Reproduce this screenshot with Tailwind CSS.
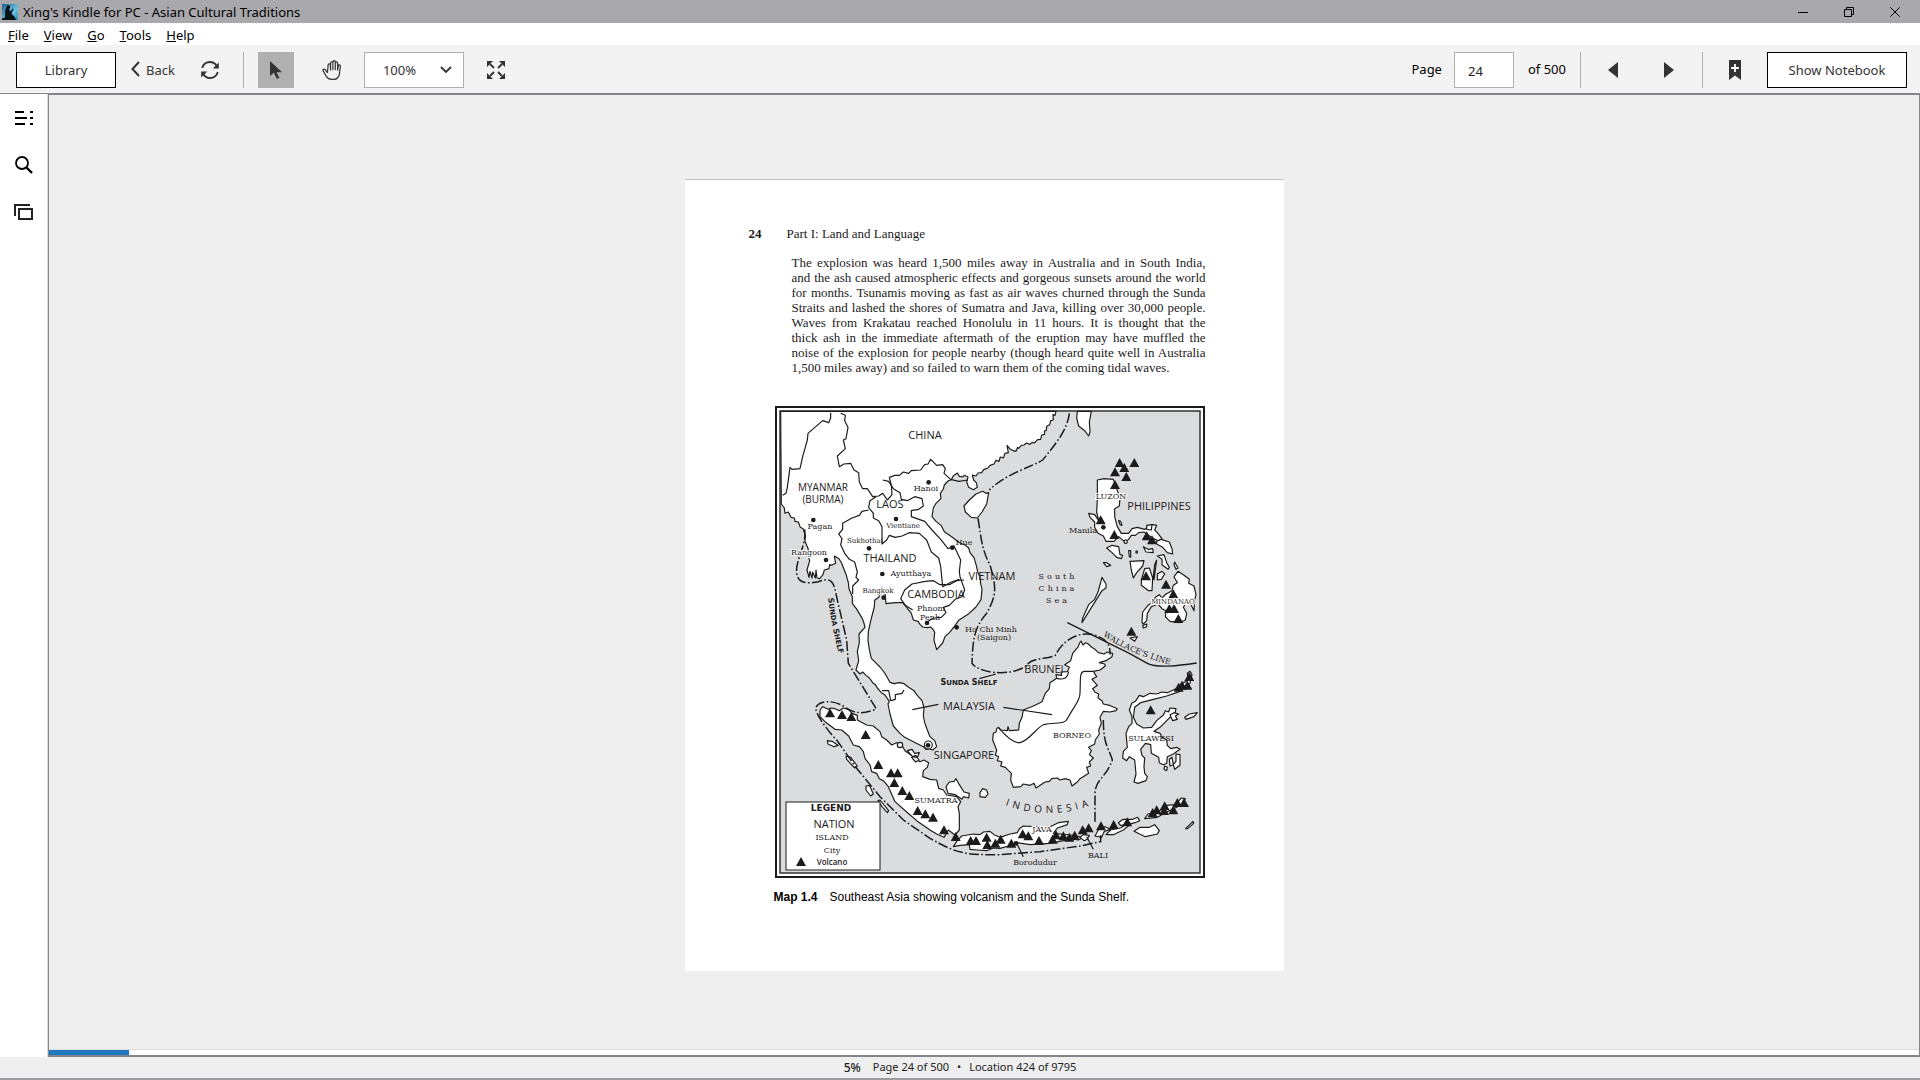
<!DOCTYPE html>
<html lang="en">
<head>
    <meta charset="UTF-8">
    <meta name="viewport" content="width=device-width, initial-scale=1.0">
    <title>Xing's Kindle for PC - Asian Cultural Traditions</title>
    <script src="https://cdn.jsdelivr.net/npm/@tailwindcss/browser@4"></script>
</head>
<body class="bg-[#efefef] font-['Noto_Sans',sans-serif] text-[13px] text-black min-h-screen flex flex-col">

    <!-- Title bar -->
    <header class="flex items-center h-[23px] bg-[#a9a8ad] pl-0.5 pr-5">
        <svg class="w-4 h-4" viewBox="0 0 16 16">
            <defs>
                <linearGradient id="sky" x1="0" y1="0" x2="1" y2="1">
                    <stop offset="0" stop-color="#1d5c80"/>
                    <stop offset=".6" stop-color="#6cc3e0"/>
                    <stop offset="1" stop-color="#2f86ae"/>
                </linearGradient>
            </defs>
            <rect width="16" height="16" fill="url(#sky)"/>
            <path d="M5 1.500a2 2 0 0 1 3 2l-1 1.500 1.500 2.500 2.500-3 .7.500-2.200 4.500 3.500 4 1 2.500H0v-1.500l3-1V7l1-2.500z" fill="#06121a"/>
        </svg>
        <h1 class="ml-[5px] grow text-[13px] leading-5">Xing's Kindle for PC - Asian Cultural Traditions</h1>
        <div class="flex items-center gap-9">
            <button aria-label="Minimize"><svg class="w-2.5 h-2.5" viewBox="0 0 10 10"><path d="M0 5.500h10" stroke="#000"/></svg></button>
            <button aria-label="Restore"><svg class="w-2.5 h-2.5" viewBox="0 0 10 10" fill="none" stroke="#000"><path d="M.5 2.500h7v7h-7zM2.500 2.500v-2h7v7h-2"/></svg></button>
            <button aria-label="Close"><svg class="w-2.5 h-2.5" viewBox="0 0 10 10"><path d="M.3.3l9.400 9.400M9.700.3L.3 9.700" stroke="#000"/></svg></button>
        </div>
    </header>

    <!-- Menu -->
    <nav class="flex items-center gap-[15px] h-[22px] bg-white px-2 pt-0.5 leading-[18px]">
        <a href="#"><u>F</u>ile</a>
        <a href="#"><u>V</u>iew</a>
        <a href="#"><u>G</u>o</a>
        <a href="#"><u>T</u>ools</a>
        <a href="#"><u>H</u>elp</a>
    </nav>

    <!-- Toolbar -->
    <div class="flex items-center justify-between h-12 bg-[#f3f3f3] pl-4 pr-[13px] pt-0.5 text-[#333]">
        <div class="flex items-center">
            <button class="w-[100px] h-9 bg-white border border-black pt-0.5">Library</button>
            <button class="flex items-center gap-1.5 ml-[15px] pt-0.5">
                <svg class="w-[9px] h-4 -mt-1" viewBox="0 0 9 16"><path d="M8 1L1.500 8 8 15" fill="none" stroke="#333" stroke-width="2"/></svg>
                Back
            </button>
            <button class="ml-[26px]" aria-label="Sync">
                <svg class="w-[18px] h-[18px]" viewBox="0 0 18 18" fill="none" stroke="#333" stroke-width="1.800">
                    <path d="M1.200 7C2.500 2.500 6 1 9 1s5 1.300 6.500 3.500M16.800 11C15.500 15.500 12 17 9 17s-5-1.300-6.500-3.500"/>
                    <path d="M17.800 1.500v6h-6zM.2 16.500v-6h6z" fill="#333" stroke="none"/>
                </svg>
            </button>
            <span class="w-px h-9 bg-[#aeaeae] ml-6"></span>
            <button class="flex items-center justify-center w-9 h-9 bg-[#b0b0b0] ml-3.5" aria-label="Select">
                <svg class="w-3 h-[18px]" viewBox="0 0 12 18" fill="#333"><path d="M0 0v15l3.800-3.300L7 18l2.300-1.200-2.800-5.600H12z"/></svg>
            </button>
            <button class="ml-7" aria-label="Pan">
                <svg class="w-5 h-5" viewBox="0 0 20 20" fill="none" stroke="#333" stroke-width="1.200" stroke-linecap="round" stroke-linejoin="round">
                    <path d="M5.500 12.500L3.200 9.700C2.200 8.600.5 9.500 1.200 10.900l3.300 5.800c1.200 1.800 2.600 2.700 5.200 2.700h2c3.500 0 5.500-2.600 5.800-6l.9-7.200c.1-1.500-1.800-1.700-2.100-.3l-.7 4.300V3c0-1.600-2.200-1.600-2.300 0v6.600V1.900c0-1.600-2.400-1.600-2.400 0v7.700V2.900c0-1.600-2.300-1.500-2.300.1v7.200l-.3-5.300c-.1-1.500-2.200-1.400-2.200.2z"/>
                </svg>
            </button>
            <label class="relative flex items-center ml-[22px]">
                <select aria-label="Zoom" class="appearance-none w-[100px] h-9 bg-white border border-[#aeaeae] pl-[18px] pt-0.5">
                    <option>100%</option>
                </select>
                <svg class="absolute right-3 w-3 h-2 pointer-events-none" viewBox="0 0 12 8"><path d="M1 1l5 5 5-5" fill="none" stroke="#333" stroke-width="1.800"/></svg>
            </label>
            <button class="ml-[23px]" aria-label="Full screen">
                <svg class="w-[18px] h-[18px]" viewBox="0 0 18 18" fill="#333" stroke="#333">
                    <path d="M3 3l4 4M15 3l-4 4M3 15l4-4M15 15l-4-4" stroke-width="1.800"/>
                    <path d="M0 0h6L0 6zM18 0v6l-6-6zM0 18v-6l6 6zM18 18h-6l6-6z" stroke="none"/>
                </svg>
            </button>
        </div>

        <div class="flex items-center">
            <label for="page" class="text-black">Page</label>
            <input id="page" value="24" class="w-[60px] h-9 ml-3 bg-white border border-[#aeaeae] px-[13px] pt-0.5 text-[#222]">
            <span class="ml-3.5 text-black">of 500</span>
            <span class="w-px h-9 bg-[#aeaeae] ml-3.5"></span>
            <button class="ml-[27px]" aria-label="Previous page"><svg class="w-2.5 h-4" viewBox="0 0 10 16" fill="#333"><path d="M10 0v16L0 8z"/></svg></button>
            <button class="ml-[46px]" aria-label="Next page"><svg class="w-2.5 h-4" viewBox="0 0 10 16" fill="#333"><path d="M0 0v16l10-8z"/></svg></button>
            <span class="w-px h-9 bg-[#aeaeae] ml-7"></span>
            <button class="ml-[26px]" aria-label="Bookmark">
                <svg class="w-3 h-5" viewBox="0 0 12 20"><path d="M0 0h12v20l-6-4.500L0 20z" fill="#333"/><path d="M6 4v8M2 8h8" stroke="#fff" stroke-width="1.800"/></svg>
            </button>
            <button class="w-[140px] h-9 bg-white border border-black ml-[26px] pt-0.5">Show Notebook</button>
        </div>
    </div>

    <div class="flex grow border-t border-[#84858a]">
        <!-- Side bar -->
        <aside class="flex flex-col items-center gap-[30px] w-12 bg-white border-r border-[#dcdcdc] pt-4">
            <button aria-label="Contents"><svg class="w-[18px] h-4" viewBox="0 0 18 16"><path d="M0 2h9M0 8h12M0 14h10M15 2h3M15 8h3M15 14h3" stroke="#000" stroke-width="2"/></svg></button>
            <button aria-label="Search"><svg class="w-[18px] h-[18px]" viewBox="0 0 18 18" fill="none" stroke="#000"><circle cx="7" cy="7" r="6" stroke-width="1.800"/><path d="M11 11l6 6" stroke-width="2.400"/></svg></button>
            <button aria-label="Flashcards"><svg class="w-[19px] h-4" viewBox="0 0 19 16" fill="none" stroke="#222" stroke-width="2"><path d="M5 5h13v10H5zM1 12V1h15"/></svg></button>
        </aside>

        <div class="flex flex-col grow border border-b-2 border-[#84858a]">
            <main class="flex grow items-center justify-center pt-1.5">
                <article class="w-[599px] h-[792px] bg-white border-t border-[#c0c0c0] pt-[45px] pl-16 pr-[78px] font-['Liberation_Serif',serif] text-[13px] text-[#1c1a1b]">
                    <p class="flex gap-[25px] leading-[18px]"><b>24</b>Part I: Land and Language</p>
                    <p class="ml-[43px] mt-3 leading-[15px] whitespace-nowrap">
                        <span class="block [text-align-last:justify]">The explosion was heard 1,500 miles away in Australia and in South India,</span>
                        <span class="block [text-align-last:justify]">and the ash caused atmospheric effects and gorgeous sunsets around the world</span>
                        <span class="block [text-align-last:justify]">for months. Tsunamis moving as fast as air waves churned through the Sunda</span>
                        <span class="block [text-align-last:justify]">Straits and lashed the shores of Sumatra and Java, killing over 30,000 people.</span>
                        <span class="block [text-align-last:justify]">Waves from Krakatau reached Honolulu in 11 hours. It is thought that the</span>
                        <span class="block [text-align-last:justify]">thick ash in the immediate aftermath of the eruption may have muffled the</span>
                        <span class="block [text-align-last:justify]">noise of the explosion for people nearby (though heard quite well in Australia</span>
                        <span class="block">1,500 miles away) and so failed to warn them of the coming tidal waves.</span>
                    </p>

                    <figure class="mt-[31px]">
                        <svg class="ml-[26px] w-[430px] h-[472px]" viewBox="0 0 430 472" role="img" aria-label="Map of Southeast Asia">
                            <defs>
                                <marker id="volcano" markerUnits="userSpaceOnUse" markerWidth="30" markerHeight="28" refX="15" refY="14"><path d="M15 0l15 27H0z" fill="#1c1a1b"/></marker>
                                <marker id="city" markerUnits="userSpaceOnUse" markerWidth="16" markerHeight="16" refX="8" refY="8"><circle cx="8" cy="8" r="7" fill="#1c1a1b"/></marker>
                                <path id="arc-indonesia" d="M218 394Q272 420 330 394"/>
                                <path id="arc-wallace" d="M324 227Q352 248 400 260"/>
                                <path id="arc-shelf" d="M52 184Q56 220 66 256"/>
                            </defs>
                            <rect x="1" y="1" width="428" height="470" fill="#fff" stroke="#1c1a1b" stroke-width="2"/>
                            <rect x="5" y="5" width="420" height="462" fill="#dbdcde" stroke="#333" stroke-width="1.500"/>

                            <!-- Land, borders and shelf line, drawn at three units per pixel -->
                            <svg width="430" height="472" viewBox="15 18 1290 1416">
                                <g fill="#fff" stroke="#1c1a1b" stroke-width="3.500" stroke-linejoin="round">
                                    <!-- Mainland -->
                                    <path d="M32 34H858l-3 12-6-2 1 16-8 2-3 12-9 5-1 12-6 2 1 10-9 2-3 13-9 1-10 10-7-2-6 6-11-4-7 6-8 1-8 9-3-3-5 12-11-3-8-5-8-10 4 22-10 2-5 14-9-3-4 13-9-3-6 11-12 4-6 8-13 5-6 9-11 1-6 9-11-3 4 15 8 8 3 14-12 7-14-7-6-16 4-15-11-5-5 5-10-2-6-10-12 8-6 12-10 4-11 12-3 12-9 13 2 15-15 15-8 14-4 26 12 14 16 13 9 18 22 15 23 18 18 8 10 8 4 14 12 15 7 24 4 18 7 16 2 20 4 18-3 30-15 22-24 22-28 18-11 16-16 20-14 13-7 19-18 20-8-28 2-24-4-8-8-8-10 2-14-2-8-8-6-9-14-4-6-20-14-18-12-14-22 0-28 3-3-34-14-4-4 18-13 10-1 20-10 38-8 36-1 26 4 28 6 26 12 12 14 14 14 18 16 28 12 4 16-3 12 2 16 12 16 10 8 12 16 18 6 22-2 24 4 20 8 22 8 20 14 12 6 18-12 10-10-4-10 2-8-8-24-12-32-16-14-12-20-22-10-36-6-30 4-8-14-20-10-6-12-14-6-10-8-6-10-14-10-8-10-10-8 6-12-12 8-28-4-28 6-26-1-26 18-20-4-16-4-10-18-30-12-16 0-20-10-24-2-18-6-22-14-36-8-14-14-8 4 22-12 6-6-2-2 12-14 4-4 14-10 12-8-2-3-24-2 24-8-18-2 18-6-20-3 18-6-22 8-28-6-18 2-16-10-24 1-18-7-20-8-4-6-16-10-2-2-10-10-2-8-16-10 4-2-16-9-12z"/>
                                    <!-- Islands north of the Philippines and Hainan -->
                                    <path d="M922 34h42l-6 32 2 30-4 12-12-16-18-14-6-24z"/>
                                    <path d="M656 278l-6 34-14 24-14 18-18-2-18-16-4-18 16-18 20-18 20-8 10 6z"/>
                                    <!-- Sumatra -->
                                    <path d="M150 930L158 920 175 928 182 924 195 926 208 932 220 924 235 928 246 940 262 946 262 960 290 975 310 978 330 995 335 1010 350 1020 365 1035 380 1028 395 1035 405 1052 430 1070 450 1085 462 1080 476 1088 472 1102 460 1112 458 1130 480 1138 500 1140 506 1165 520 1170 530 1185 560 1190 572 1205 564 1220 568 1240 568 1290 555 1305 535 1290 522 1312 500 1302 480 1290 440 1262 410 1236 375 1205 355 1160 340 1142 328 1136 320 1120 305 1115 300 1095 285 1075 280 1055 268 1040 250 1035 236 1008 215 990 195 988 165 965 150 950z"/>
                                    <path d="M528 1160l10-14 14-2 6-8 10 18 14 22 16 4-2 14-16-4-4 8-20-14-22-4z"/>
                                    <path d="M630 1178l8-12 12 4 4 12-8 10-16-2z"/>
                                    <circle cx="390" cy="1035" r="8"/>
                                    <path d="M412 1052l14-4 8 12 14-2-6 14-14-2zM425 1072l12-6 10 14-10 6z"/>
                                    <path d="M172 1022l14 2 18 12-12 4-18-8zM228 1068l14 4 20 26-8 6-24-26zM288 1158l10-2 12 26-8 6-14-18zM324 1202l6-2 26 32-4 6-16-18z"/>
                                    <!-- Java -->
                                    <path d="M550 1340L562 1322 575 1308 610 1302 630 1304 640 1296 660 1294 672 1304 690 1312 720 1302 742 1298 748 1286 760 1278 790 1280 840 1280 865 1268 895 1264 892 1274 862 1284 850 1300 900 1305 940 1312 925 1320 900 1316 880 1322 840 1330 780 1334 740 1328 716 1338 690 1345 670 1344 650 1352 622 1350 600 1348 598 1334 570 1336z"/>
                                    <path d="M930 1312l10-8 18 2-6 12-10 4zM975 1308l10-18 20-10 16 8-18 6-8 18zM1008 1304l14-14 30-6 12-8 16-2-20 16-30 14zM1045 1268l14-10 30 0 14-6 6 10-14 6-24 6-20 2z"/>
                                    <path d="M1092 1294l18-12 28 0 16-8 14 18-6 10-36 8zM1124 1256l10-14 30-6 26-20 26-2 18-20 12 2-10 18-34 16-40 22zM1247 1286l22-22 2 6-18 16z"/>
                                    <!-- Borneo and Sulawesi -->
                                    <g transform="translate(630 690)">
                                        <path d="M295 50L298 40 303 33 309 45 317 38 325 42 335 52 345 58 355 68 372 72 382 66 398 70 396 80 378 92 358 98 374 102 376 108 360 120 340 124 350 140 336 148 352 166 338 176 344 186 356 192 354 204 366 212 370 222 388 226 412 236 408 242 390 246 370 244 360 262 364 280 356 300 358 312 346 330 344 342 326 352 334 362 328 374 340 384 328 396 332 408 320 412 326 430 300 446 292 456 276 468 270 450 255 446 240 450 232 444 215 446 208 454 195 456 168 474 162 460 150 466 130 462 122 470 100 472 92 450 94 430 76 412 62 408 66 396 52 392 56 380 46 376 50 360 38 330 40 310 48 306 50 296 55 292 62 300 82 302 84 290 88 302 116 300 118 280 126 262 130 240 160 228 186 215 196 190 208 176 210 158 230 145 228 134 245 136 243 126 262 125 268 112 254 104 272 92 278 70z"/>
                                        <path d="M455 220L466 214 478 196 490 200 510 190 530 192 545 186 562 188 585 178 605 162 625 150 622 130 630 124 636 134 630 160 600 184 560 198 520 208 482 218 464 232 460 262 470 282 490 294 515 292 530 272 550 255 556 242 566 246 570 234 588 236 586 246 560 272 540 292 522 304 540 310 546 322 560 330 562 346 572 356 590 352 600 358 580 372 562 380 560 400 550 404 538 398 536 382 514 370 512 344 496 340 482 358 486 376 494 384 492 410 494 430 502 440 498 452 474 460 462 456 468 432 464 390 448 380 440 392 428 384 430 364 442 352 438 310 446 290 456 280 456 260 448 240z"/>
                                        <path d="M588 372l12 2 0 32-16 12-4-14 8-10zM568 388l8-6 4 22-10 4zM554 408l8 4-2 10-8-4zM570 254l12-6 14 4-10 6 6 10-14 4zM614 262l14-10 24-4-10 12-24 8z"/>
                                    </g>
                                    <!-- Palawan -->
                                    <path d="M996 532l12 20 0 12-12 8-24 38-36 58 2-14 18-40 18-16 10-22z"/>
                                    <path d="M1000 488l10 0 12 8-12 4z"/>
                                    <!-- Luzon and the Visayas -->
                                    <path d="M982 240l20-4 28 2 12 34 8 22-2 24-14 8 0 24 8 30 12 20 22 0 10-14 16-4 22 6 10-6 14-8 12 2-6 14 8 8 14 18-12 6-20-10-22-16-16 2-10 8-12 0-10 14-14 2-14-12-14 14-24 0-8-16-16-8-10-18 0-16-14-14-4-12 18 4 12 18-6-26 2-38z"/>
                                    <path d="M1010 444l16-8 20 4 4 24 8 2-4 10-14-4-14-14zM1046 362l6 2 4 12-6-2zM1076 452h6v20l-4-2zM1098 453l4 0v6h-4zM1120 440l14 8 14-2 2 12-22-2zM1160 424l14-6 24 8 8 20 2 16-16-4-14-16-18-10zM1162 468l20-4 8 24 8 14-4 6-18-14 0-16zM1214 486l10 18-6 4-6-14z"/>
                                    <path d="M1080 484l42-2-4 16-18 20-10 16-6-24zM1114 540l10-34 14-2 10 30-2 38-10 0-22-16zM1152 540l8-60-6 14-4 36zM1162 522l14-8 8 8-10 16-12 2z"/>
                                    <path d="M1130 376l16-2-2 16-14-2z"/><circle cx="1067" cy="425" r="5"/>
                                    <!-- Mindanao -->
                                    <path d="M1116 668L1118 636 1134 616 1150 606 1156 592 1168 584 1176 594 1188 582 1206 572 1210 556 1222 548 1212 530 1224 514 1240 524 1258 538 1256 550 1272 558 1278 584 1274 600 1272 632 1262 612 1248 608 1240 622 1250 640 1246 660 1228 668 1200 664 1186 650 1188 632 1176 626 1164 612 1144 620 1132 640 1130 662 1120 672z"/>
                                    <path d="M1118 676l12-4 0 8-10 4zM1080 714l22-4-8 14z"/>
                                    <circle cx="475" cy="1035" r="12"/>
                                </g>

                                <g fill="none" stroke="#1c1a1b" stroke-width="3.500" stroke-linejoin="round">
                                    <!-- Borders -->
                                    <path d="M182 38v16l-6 14-18-6-44 38-2 20-14 50-8 36-24 2-6-6-8 60-4 18-10 6"/>
                                    <path d="M212 40l14 6-2 16 10 20-6 34-8 4 6 26-24 22 6 32 14-8 20-2 10 20 14 8 2 28 10 20 14 0 16 24 18-2 12-8 14 20 14-16-2-28-6-24 16-6 14 0 12-10 16 4 8-8 28-2 12-16 10-2 8-14 18 18 18-2 8 12-4 14 20 18 24 6 28-4"/>
                                    <path d="M318 290l-18 12-4 20 14 18 0 14 16 8 10 18 0 52 14-12 8-14 18 6 20-4 22-10 30 2 22 20 14 36 22 18 6 26 6 60 26-14 24-8"/>
                                    <path d="M296 330l-20 4-8 12-22 8-28 16 0 18-12 14 10 14-4 18 12 26 14 18 16 8 8 30-4 16 8 8-18 18 0 24"/>
                                    <path d="M338 240l18 4 14 22 20 12 4 20 18 4 22-12 22 6 4 22-14 10-22 4 0 18 40 14 22 26 26 28 22 28 18-8 20 42-4 34 2 16 14 40-8 20-20 8-18 18-18 6 8 16-14 14-22 2-26 14"/>
                                    <path d="M428 630l-22-14-14-20 12-26 22-18 40-8 24-2 20 12 28 0 22-12 22-2"/>
                                    <path d="M336 872l20 0 6 30 14-4 0-14 20-4 6-10"/>
                                    <!-- Borneo border -->
                                    <path d="M685 982C710 1012 730 1030 750 1028 780 1020 800 982 820 974 860 966 885 974 892 956 910 920 930 905 930 880 932 840 928 816 942 814h28M860 835c20 5 32 1 36-20"/>
                                    <!-- Pointers -->
                                    <path d="M427 929l78-16M700 922l146 22M628 836l50-14M740 1330l20 40M950 1310l20 38"/>
                                    <path d="M892 668l186 92 54 30c30 16 100 6 148-1" stroke-width="4"/>
                                </g>
                                <!-- Sunda shelf -->
                                <g fill="none" stroke="#1c1a1b" stroke-width="4.500" stroke-dasharray="30 7 5 7">
                                    <path d="M898 40c-6 50-40 90-80 140-30 20-110 40-160 90M624 355c10 60 10 90 36 140 20 70 20 90-10 145-30 36-42 60-44 150 16 24 100 44 160 10 20-30 60-20 90-34 30-60 90-76 130-56 26 10 36 30 34 54"/>
                                    <path d="M104 388C110 440 75 480 80 520 85 550 110 552 145 545 190 530 190 545 202 600L230 720 235 790 319 927C275 945 250 940 220 918 190 900 145 900 137 925 140 950 180 1000 200 1020L260 1105 330 1190 400 1260 480 1315C560 1360 580 1365 690 1364L810 1355 930 1338 992 1325v-20"/>
                                    <path d="M1000 960C1000 1040 1020 1050 1027 1080 1010 1130 975 1140 975 1180V1270"/>
                                </g>

                                <!-- Volcanoes -->
                                <path fill="none" marker-start="url(#volcano)" marker-mid="url(#volcano)" marker-end="url(#volcano)" d="M1049 188L1093 188L1063 203L1035 216L1069 230L1035 254L992 360L1033 404L1130 408L1146 420L1128 528L1188 553L1210 582L1198 626L1212 626L1225 656L1084 694L180 939L216 944L244 950L287 1004L325 1094L363 1119L383 1119L373 1148L397 1172L418 1187L443 1232L466 1242L489 1252L522 1290L557 1310L602 1322L618 1322L650 1312L652 1334L676 1330L692 1318L724 1330L758 1302L775 1308L807 1322L848 1318L858 1305L880 1308L898 1312L914 1306L938 1290L956 1284L993 1278L1031 1274L1072 1266L1142 930L1258 830L1226 862L1236 856L1252 856L1148 1238L1160 1230L1182 1232L1184 1218L1210 1230L1222 1208L1242 1208"/>
                                <!-- Cities -->
                                <path fill="none" marker-start="url(#city)" marker-mid="url(#city)" marker-end="url(#city)" d="M130 360L168 480L297 445L337 522L341 593L378 357L476 247L547 443L471 669L560 682L1000 382L738 1330L474 1036"/>
                            </svg>

                            <!-- Legend -->
                            <rect x="11" y="396" width="94" height="68" fill="#fff" stroke="#1c1a1b"/>
                            <path d="M26 451l5 9h-10z" fill="#1c1a1b"/>

                            <g class="font-['Open_Sans',sans-serif] text-[11px]" fill="#1c1a1b" text-anchor="middle">
                                <text x="150" y="33">CHINA</text>
                                <text x="48" y="85" class="text-[10px]">MYANMAR</text>
                                <text x="48" y="97" class="text-[10px]">(BURMA)</text>
                                <text x="115" y="102">LAOS</text>
                                <text x="115" y="156">THAILAND</text>
                                <text x="161" y="192">CAMBODIA</text>
                                <text x="217" y="174">VIETNAM</text>
                                <text x="384" y="104">PHILIPPINES</text>
                                <text x="269" y="267">BRUNEI</text>
                                <text x="194" y="304">MALAYSIA</text>
                                <text x="189" y="353">SINGAPORE</text>
                                <text x="59" y="422">NATION</text>
                                <text x="57" y="459" class="text-[8px] font-semibold">Volcano</text>
                                <text class="text-[10px] tracking-[4px]"><textPath href="#arc-indonesia" startOffset="50%">INDONESIA</textPath></text>
                            </g>
                            <g class="font-['DejaVu_Serif',serif] text-[8px]" fill="#1c1a1b" text-anchor="middle">
                                <text x="151" y="85">Hanoi</text>
                                <text x="45" y="123">Pagan</text>
                                <text x="34" y="149" stroke="#fff" stroke-width="2" paint-order="stroke">Rangoon</text>
                                <text x="128" y="122" class="text-[7px]">Vientiane</text>
                                <text x="90" y="137" class="text-[7px]">Sukhothai</text>
                                <text x="136" y="170">Ayutthaya</text>
                                <text x="103" y="187" class="text-[7px]" stroke="#fff" stroke-width="2" paint-order="stroke">Bangkok</text>
                                <text x="156" y="205">Phnom</text>
                                <text x="155" y="214">Penh</text>
                                <text x="189" y="139">Hue</text>
                                <text x="216" y="226">Ho Chi Minh</text>
                                <text x="219" y="234">(Saigon)</text>
                                <text x="308" y="127">Manila</text>
                                <text x="336" y="93" stroke="#fff" stroke-width="2" paint-order="stroke">LUZON</text>
                                <text x="398" y="198" class="text-[7px]" stroke="#fff" stroke-width="2" paint-order="stroke">MINDANAO</text>
                                <text x="283" y="173" class="tracking-[3px]">South</text>
                                <text x="283" y="185" class="tracking-[3px]">China</text>
                                <text x="283" y="197" class="tracking-[3px]">Sea</text>
                                <text x="297" y="332">BORNEO</text>
                                <text x="376" y="335">SULAWESI</text>
                                <text x="161" y="397">SUMATRA</text>
                                <text x="267" y="426" stroke="#fff" stroke-width="2" paint-order="stroke">JAVA</text>
                                <text x="323" y="452">BALI</text>
                                <text x="260" y="459">Borodudur</text>
                                <text x="57" y="434">ISLAND</text>
                                <text x="57" y="447">City</text>
                                <text><textPath href="#arc-wallace" startOffset="50%">WALLACE'S LINE</textPath></text>
                            </g>
                            <g class="font-['DejaVu_Sans',sans-serif] font-bold text-[8px]" fill="#1c1a1b" text-anchor="middle">
                                <text x="194" y="279">S<tspan class="text-[7px]">UNDA</tspan> S<tspan class="text-[7px]">HELF</tspan></text>
                                <text x="56" y="405" class="text-[9px]">LEGEND</text>
                                <text><textPath href="#arc-shelf" startOffset="50%">S<tspan class="text-[7px]">UNDA</tspan> S<tspan class="text-[7px]">HELF</tspan></textPath></text>
                            </g>
                        </svg>
                        <figcaption class="flex gap-3 ml-[25px] mt-2.5 font-['Liberation_Sans',sans-serif] text-[12px] leading-[18px] text-black whitespace-nowrap"><b>Map 1.4</b>Southeast Asia showing volcanism and the Sunda Shelf.</figcaption>
                    </figure>
                </article>
            </main>
            <!-- Reading progress -->
            <div class="h-1.5 bg-white border-t border-[#dcdcdc]">
                <div class="h-[5px] bg-[#1f78bd]" style="width: 4.3%"></div>
            </div>
        </div>
    </div>

    <!-- Status bar -->
    <footer class="flex items-center justify-center h-[23px] border-b-2 border-[#9b9ba0] text-[11px] text-[#222]">
        <span class="text-[12px] font-medium">5%</span>
        <span class="ml-3">Page 24 of 500</span>
        <span class="mx-2">•</span>
        <span>Location 424 of 9795</span>
    </footer>
</body>
</html>
